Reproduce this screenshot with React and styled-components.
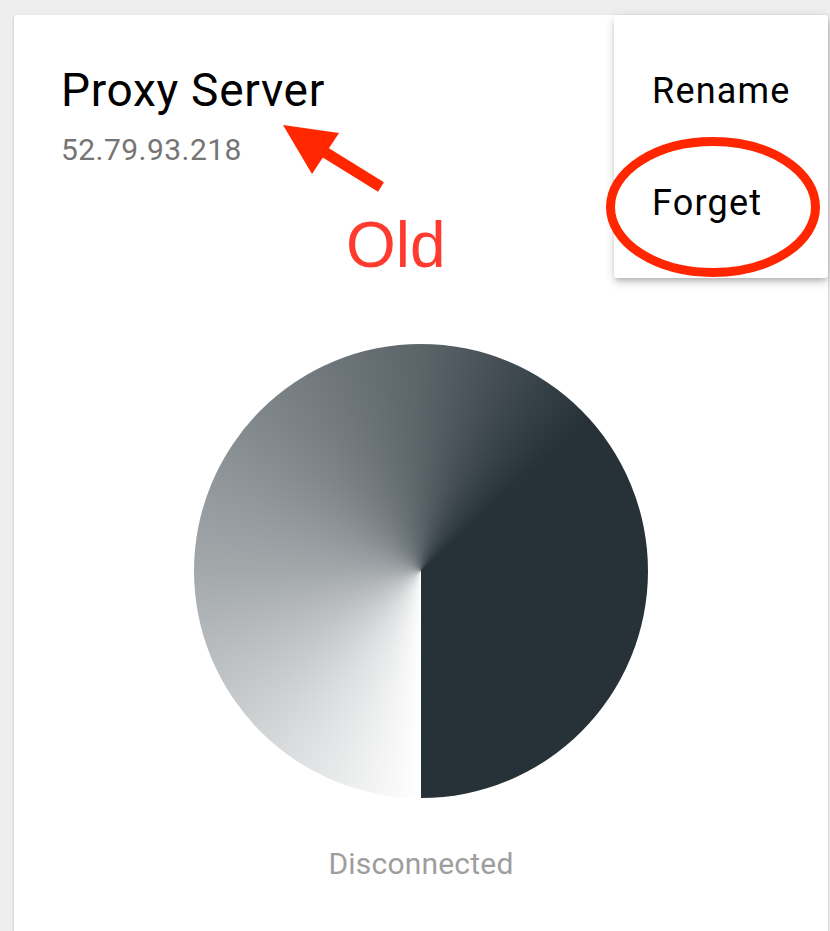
import React from 'react';
import styled, {createGlobalStyle} from "styled-components";

const GlobalStyle = createGlobalStyle`
    body {
        margin: 0;
        background: #eeeeee;
        font-family: Roboto, "Noto Sans", sans-serif;
    }
`

const Page = styled.div`
    position: relative;
    padding: 15px 2px 0 14px;
    height: 931px;
    box-sizing: border-box;
    overflow: hidden;
`

const Card = styled.div`
    position: relative;
    background: #fff;
    border-radius: 3px;
    min-height: 980px;
    padding: 48px 46px 0 47px;
    box-sizing: border-box;
    box-shadow: 0 1px 3px rgba(0, 0, 0, .2), 0 1px 1px rgba(0, 0, 0, .14), 0 2px 1px -1px rgba(0, 0, 0, .12);
`

const Title = styled.h1`
    margin: 0;
    font-size: 46px;
    line-height: 54px;
    font-weight: 400;
    letter-spacing: 0.7px;
    color: #000;
`

const Address = styled.div`
    margin-top: 15px;
    font-size: 30px;
    line-height: 36px;
    letter-spacing: 0.45px;
    color: #757575;
`

const Body = styled.div`
    display: flex;
    flex-direction: column;
    align-items: center;
    margin-top: 176px;
    margin-left: -47px;
    margin-right: -46px;
`

const Pie = styled.div`
    width: 454px;
    height: 454px;
    border-radius: 50%;
    background: conic-gradient(from 180deg, #ffffff 0deg, #a3a8ab 90deg, #5b6469 180deg, #263238 228deg, #263238 360deg);
`

const Status = styled.div`
    margin-top: 48px;
    font-size: 30px;
    line-height: 36px;
    letter-spacing: 0.2px;
    color: #9e9e9e;
`

const Menu = styled.div`
    position: absolute;
    top: 0;
    right: 0;
    width: 214px;
    padding: 20px 0 19px;
    background: #fff;
    border-radius: 3px;
    box-shadow: 0 4px 5px -2px rgba(0, 0, 0, .2), 0 6px 10px 0 rgba(0, 0, 0, .1), 0 1px 12px 0 rgba(0, 0, 0, .08);
`

const MenuItem = styled.div`
    height: 112px;
    line-height: 112px;
    padding-left: 38px;
    font-size: 36px;
    letter-spacing: 1.2px;
    color: #000;
`

const Overlay = styled.svg`
    position: absolute;
    left: 0;
    top: 0;
    pointer-events: none;
`

const Note = styled.span`
    position: absolute;
    left: 346px;
    top: 213px;
    font-family: "Liberation Sans", Arial, sans-serif;
    font-size: 64px;
    line-height: 64px;
    color: #ff3b30;
`

const App = () => {
    let items = ['Rename', 'Forget']

    return <Page>
        <GlobalStyle/>
        <Card>
            <Title>Proxy Server</Title>
            <Address>52.79.93.218</Address>
            <Body>
                <Pie/>
                <Status>Disconnected</Status>
            </Body>
            <Menu>
                {items.map(item => <MenuItem key={item}>{item}</MenuItem>)}
            </Menu>
        </Card>

        {/* markup drawn over the screenshot */}
        <Overlay width="830" height="931" viewBox="0 0 830 931">
            <line x1="318" y1="148" x2="381" y2="187" stroke="#ff2600" strokeWidth="11"/>
            <polygon points="283,125 339,133 312,174" fill="#ff2600"/>
            <ellipse cx="713" cy="207" rx="102.5" ry="65.5" fill="none" stroke="#ff2600" strokeWidth="9"/>
        </Overlay>
        <Note>Old</Note>
    </Page>
}

export default App
